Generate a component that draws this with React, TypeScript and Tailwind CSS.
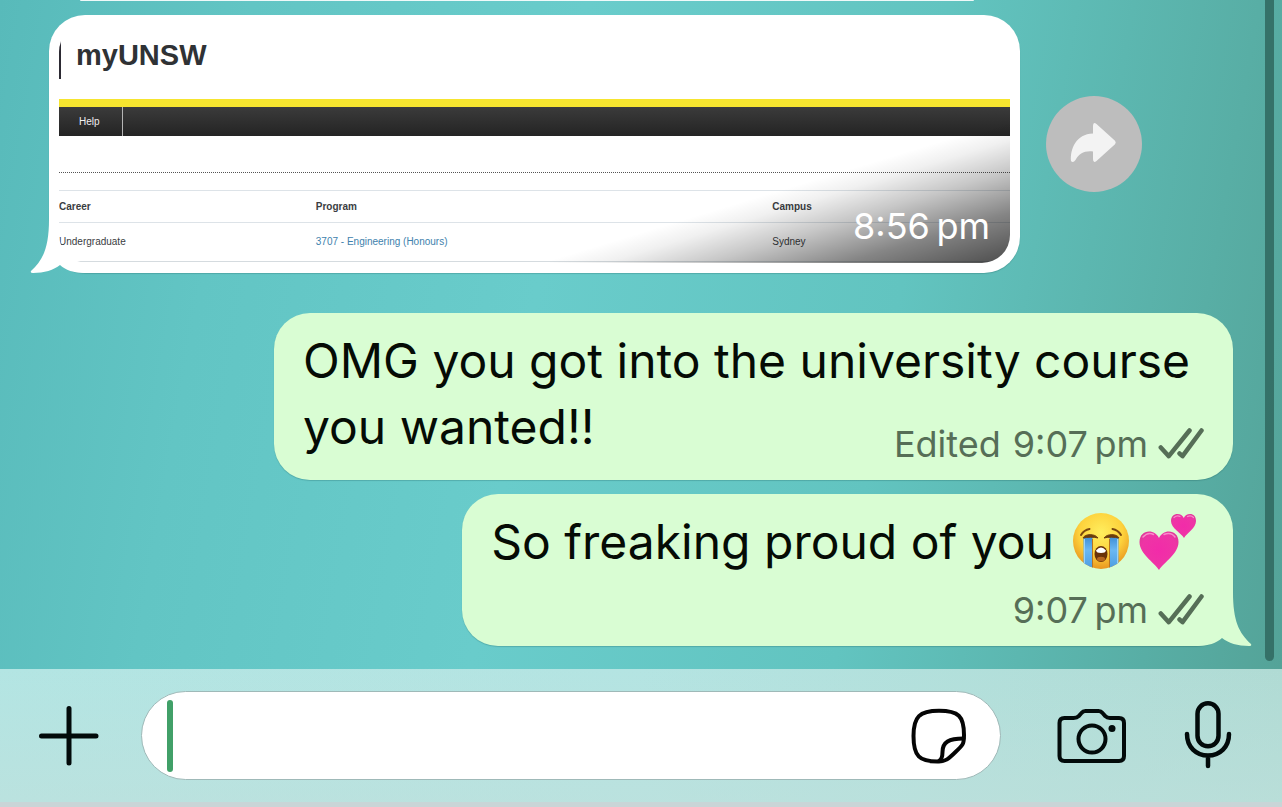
import type { ReactNode } from "react";

function Tail({ side }: { side: "left" | "right" }) {
  return (
    <svg
      aria-hidden="true"
      viewBox="0 0 56 58"
      className={
        side === "left"
          ? "absolute bottom-0 -left-5 h-[58px] w-14 fill-white"
          : "absolute -right-5 bottom-0 h-[58px] w-14 -scale-x-100 fill-[#d9fdd3]"
      }
    >
      <path d="M20 4 C20 33 14 45 2 56 Q1 58 4 58 C15 58 25 55 31 50 C36 55 45 58 56 58 V4Z" />
    </svg>
  );
}

function Ticks() {
  return (
    <svg
      viewBox="0 0 46 32"
      role="img"
      aria-label="Delivered"
      className="h-8 w-[46px] fill-none stroke-[#566e57]"
      strokeWidth="4.500"
      strokeLinecap="round"
      strokeLinejoin="round"
    >
      <path d="M2.800 19.500 L10.800 28.200 L31.500 2.500" />
      <path d="M21.500 25.500 L24.500 28.200 L43.500 2.500" />
    </svg>
  );
}

function Meta({ children }: { children: ReactNode }) {
  return (
    <span className="flex h-9 items-center gap-[10px] text-[36px] leading-9 text-[#566e57]">
      <span className="flex gap-3">{children}</span>
      <Ticks />
    </span>
  );
}

function SobEmoji() {
  return (
    <svg viewBox="0 0 58 60" role="img" aria-label="Loudly crying face" className="h-[60px] w-[58px] shrink-0">
      <defs>
        <radialGradient id="face" cx="50%" cy="35%" r="65%">
          <stop offset="0" stopColor="#ffee5e" />
          <stop offset="0.6" stopColor="#fdd23c" />
          <stop offset="1" stopColor="#e9961f" />
        </radialGradient>
        <linearGradient id="tear" x1="0" y1="0" x2="0" y2="1">
          <stop offset="0" stopColor="#3f8fd6" />
          <stop offset="0.4" stopColor="#6bb8f2" />
          <stop offset="1" stopColor="#4a9be0" />
        </linearGradient>
        <clipPath id="round">
          <circle cx="29" cy="29" r="28" />
        </clipPath>
      </defs>
      <circle cx="29" cy="29" r="28" fill="url(#face)" />
      <g clipPath="url(#round)">
        <path d="M11.500 25 H20.500 V58 H11.500Z M37.500 25 H46.500 V58 H37.500Z" fill="url(#tear)" />
        <path d="M20.500 27 V58 M37.500 27 V58" stroke="#b87420" strokeWidth="1" />
        <path d="M12.500 27 V55 M45.500 27 V55" stroke="#9ad3fa" strokeWidth="1" />
      </g>
      <path d="M11 26 C13 21.500 23 21.500 26 26 C22 24.800 15 25 11 26Z M32 26 C35 21.500 45 21.500 47 26 C43 25 36 24.800 32 26Z" fill="#6b3c0c" stroke="#6b3c0c" strokeWidth="1" />
      <path d="M9 23 Q12 18 17.500 17 M40.500 17 Q46 18 49 23" fill="none" stroke="#7a4810" strokeWidth="2" strokeLinecap="round" />
      <ellipse cx="29" cy="42" rx="6.500" ry="8" fill="#6a3208" />
      <path d="M24 38.500 Q29 32.500 34 38.500 Q33.500 41 29 41 Q24.500 41 24 38.500Z" fill="#fff" />
      <ellipse cx="29" cy="47" rx="4" ry="2.200" fill="#b5651d" />
    </svg>
  );
}

function HeartsEmoji() {
  return (
    <svg viewBox="0 0 60 60" role="img" aria-label="Two hearts" className="h-[60px] w-[60px] shrink-0">
      <defs>
        <radialGradient id="pink" cx="50%" cy="50%" r="65%">
          <stop offset="0" stopColor="#f22ba9" />
          <stop offset="0.7" stopColor="#ee35a5" />
          <stop offset="1" stopColor="#d93a94" />
        </radialGradient>
      </defs>
      <path d="M21 58 C16 50 1.500 42 1.500 30 C1.500 23 6 19.500 11 19.500 C15.500 19.500 19 22 21 26 C23 22 26.500 19.500 31 19.500 C36 19.500 40.500 23 40.500 30 C40.500 42 26 50 21 58Z" fill="url(#pink)" />
      <path d="M5 25 Q10 19.500 15.500 22.500 M26 22.500 Q33 19.500 37 25" fill="none" stroke="#f98bcb" strokeWidth="1.500" strokeLinecap="round" />
      <path d="M46 26 C43 21 33 16 33 9 C33 4.500 36 2 39.500 2 C42.500 2 44.500 3.500 45.800 6 C47 3.500 49 2 52 2 C55.500 2 58 4.500 58 9 C58 16 49 21 46 26Z" fill="url(#pink)" />
      <path d="M36 5.500 Q39 2.800 42 4.500 M49.500 4.500 Q53 2.800 55.500 5.500" fill="none" stroke="#f98bcb" strokeWidth="1.200" strokeLinecap="round" />
    </svg>
  );
}

function PortalPreview() {
  return (
    <div className="relative overflow-hidden rounded-[28px] pb-px font-['Liberation_Sans',Arial,sans-serif] text-[10px] text-[#3a3d42]">
      <header className="pt-4 pb-5">
        <h1 className="border-l-2 border-[#2c2a33] pl-[15px] text-[29px] font-bold text-[#2f3235]">
          <span className="block pb-2 leading-[31px]">myUNSW</span>
        </h1>
      </header>
      <nav className="flex h-[37px] border-t-8 border-[#f6e52f] bg-linear-to-b from-[#3b3b3b] to-[#242424]">
        <a href="#help" className="flex w-16 items-center border-r border-[#b5b5b5] pl-5 text-[#f0f0f0]">
          Help
        </a>
      </nav>
      <div className="h-[37px] border-b border-dotted border-[#555]" />
      <table className="mt-[17px] w-full table-fixed border-collapse text-left leading-4">
        <thead>
          <tr className="h-8 border-y border-[#dde3e8]">
            <th className="w-[27%] p-0">Career</th>
            <th className="w-[48%] p-0">Program</th>
            <th className="p-0">Campus</th>
          </tr>
        </thead>
        <tbody>
          <tr className="h-[39px] border-b border-[#d5dbdf]">
            <td className="p-0">Undergraduate</td>
            <td className="p-0">
              <a href="#program" className="text-[#4182ad]">3707 - Engineering (Honours)</a>
            </td>
            <td className="p-0">Sydney</td>
          </tr>
        </tbody>
      </table>
      <div className="absolute right-0 bottom-0 h-[140px] w-[460px] bg-[linear-gradient(to_top_left,rgba(0,0,0,0.7)_0%,rgba(0,0,0,0.48)_18%,rgba(0,0,0,0.22)_33%,rgba(0,0,0,0.06)_44%,transparent_51%)]" />
      <time className="absolute right-5 bottom-[19px] font-[Inter,sans-serif] text-[36px] leading-9 text-white">
        8:56{"\u202f"}pm
      </time>
    </div>
  );
}

function Composer() {
  return (
    <footer className="bg-linear-to-r from-[#b3e5e3] via-[#b4e4e2] to-[#b0dbd4]">
      <form className="flex items-center bg-linear-to-b from-transparent to-[#bfe0dc]/60 pt-[22px] pr-[50px] pb-[22px] pl-[39px]">
        <button type="button" aria-label="Attach" className="mr-[42px] shrink-0">
          <svg viewBox="0 0 60 60" className="size-[60px] stroke-[#020a0a] stroke-[5]" strokeLinecap="round">
            <path d="M2.500 30 H57 M30 2.500 V57" />
          </svg>
        </button>
        <div className="flex h-[89px] min-w-0 flex-1 items-center rounded-full border border-[#9fb9b8] bg-white pr-[33px] pl-[25px]">
          <span className="h-[72px] w-[6px] rounded-full bg-[#41a068]" />
          <input
            type="text"
            aria-label="Message"
            className="h-full min-w-0 flex-1 bg-transparent px-3 text-[48px] outline-none"
          />
          <button type="button" aria-label="Stickers" className="shrink-0">
            <svg viewBox="0 0 56 56" className="size-14 fill-none stroke-[#050505] stroke-[4]" strokeLinecap="round" strokeLinejoin="round">
              <path d="M28 53.500 C8 54 2.500 48 2.500 28 C2.500 8.500 8.500 2.800 28 2.800 C47.500 2.800 53 8 53 27 C53 36 52.500 36.500 44 44.500 C37 51 35 53.300 28 53.500Z" />
              <path d="M52.500 30.500 C38 30.500 31.500 34 31.500 44 C31.500 49 30.500 51.500 28 53" />
            </svg>
          </button>
        </div>
        <button type="button" aria-label="Camera" className="ml-14 shrink-0">
          <svg viewBox="0 0 71 56" className="h-14 w-[71px] fill-none stroke-[#020a0a] stroke-[4]" strokeLinecap="round" strokeLinejoin="round">
            <path d="M7.500 10 H16.500 C19 10 20.500 9.500 21.500 8.300 L24.500 5 Q26 3 28.500 3 H41.500 Q44 3 45.500 5 L48.500 8.300 C49.500 9.500 51 10 53 10 H62 Q67 10 67 15 V48 Q67 53 62 53 H7.500 Q2.500 53 2.500 48 V15 Q2.500 10 7.500 10Z" />
            <circle cx="35" cy="31" r="13.500" />
            <circle cx="55" cy="20.500" r="3.500" className="fill-[#020a0a] stroke-none" />
          </svg>
        </button>
        <button type="button" aria-label="Record voice message" className="ml-14 shrink-0">
          <svg viewBox="0 0 48 70" className="h-[70px] w-12 fill-none stroke-[#020a0a]" strokeWidth="4.500" strokeLinecap="round">
            <rect x="13.500" y="2.300" width="21" height="43" rx="10.500" />
            <path d="M3 33 C3 46 12 54.500 24 54.500 S45 46 45 33 M24 55 V65" />
          </svg>
        </button>
      </form>
      <div className="h-[5px] bg-[#c9d5d7]" />
    </footer>
  );
}

export default function App() {
  return (
    <div className="flex min-h-screen flex-col font-[Inter,sans-serif]">
      <main className="relative flex-1 bg-linear-[100deg,#58baba_0%,#62c5c4_18%,#69cccb_42%,#62c4c0_68%,#58aea5_90%,#54a398_100%]">
        <div className="mr-[24%] ml-20 h-px rounded-b-full bg-white/90" />

        <div className="flex items-center pt-[14px] pl-[49px]">
          <section className="relative w-[971px] max-w-[79%] rounded-[36px] bg-white px-[10px] pt-[9px] pb-[10px] shadow-[0_1px_1px_rgba(0,60,60,0.2)]">
            <Tail side="left" />
            <PortalPreview />
          </section>
          <button
            type="button"
            aria-label="Forward"
            className="ml-[26px] flex size-24 shrink-0 items-center justify-center rounded-full bg-[#bdbdbd]"
          >
            <svg viewBox="1 1 48 48" className="size-12 fill-[#f3f3f3]">
              <path d="M24 7 Q24 2.500 27.500 5 L46 21.800 Q47.500 23.500 46 25.200 L27.500 42 Q24 44.500 24 40 V32.500 C15 31.500 10 35 6.500 41 Q4 44.500 2 42 C1 30 7 15 24 14.500Z" />
            </svg>
          </button>
        </div>

        <div className="flex flex-col items-end gap-[14px] pt-10 pr-[49px] pb-5 text-[48px] leading-[66px] text-[#050b05]">
          <section className="flow-root max-w-[959px] rounded-[36px] bg-[#d9fdd3] px-[29px] pt-[15px] pb-[18px] shadow-[0_1px_1px_rgba(0,60,60,0.2)]">
            <p>
              OMG you got into the university course you wanted!!
              <span className="float-right mt-8">
                <Meta>
                  <span>Edited</span>
                  <time>9:07{"\u202f"}pm</time>
                </Meta>
              </span>
            </p>
          </section>
          <section className="relative flex flex-col items-end rounded-[36px] bg-[#d9fdd3] px-[29px] pt-[15px] pb-[18px] shadow-[0_1px_1px_rgba(0,60,60,0.2)]">
            <Tail side="right" />
            <p className="relative flex items-center pr-1.5">
              <span className="pr-[18px]">So freaking proud of you</span>
              <span className="flex gap-2">
                <SobEmoji />
                <HeartsEmoji />
              </span>
            </p>
            <div className="relative pt-[17px]">
              <Meta>
                <time>9:07{"\u202f"}pm</time>
              </Meta>
            </div>
          </section>
        </div>

        <div className="absolute top-0 right-2 bottom-2 w-[9px] rounded-b-full bg-[#326b63]/90" />
      </main>
      <Composer />
    </div>
  );
}
